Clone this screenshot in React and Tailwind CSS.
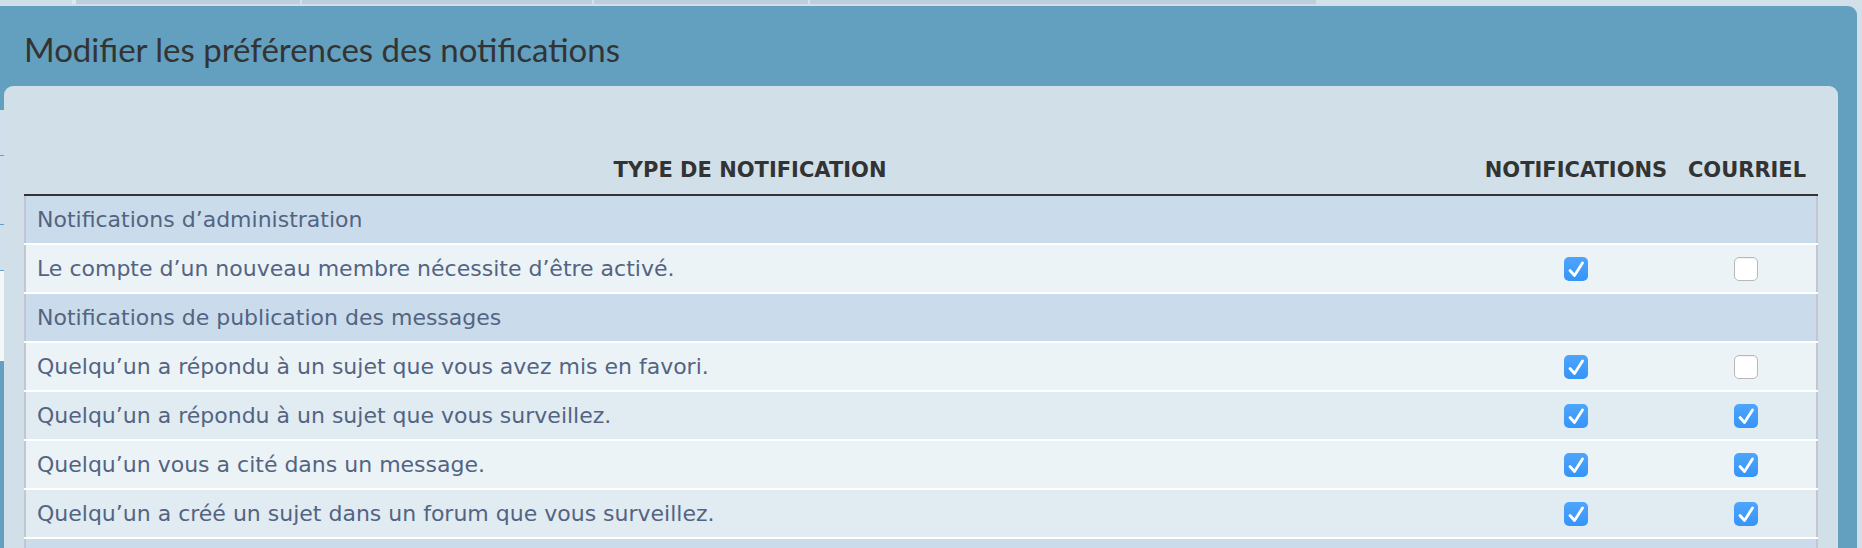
import React from "react";

// Lignes du tableau des préférences
const rows = [
  { cat: "Notifications d’administration" },
  { label: "Le compte d’un nouveau membre nécessite d’être activé.", notif: true, mail: false },
  { cat: "Notifications de publication des messages" },
  { label: "Quelqu’un a répondu à un sujet que vous avez mis en favori.", notif: true, mail: false },
  { label: "Quelqu’un a répondu à un sujet que vous surveillez.", notif: true, mail: true },
  { label: "Quelqu’un vous a cité dans un message.", notif: true, mail: true },
  { label: "Quelqu’un a créé un sujet dans un forum que vous surveillez.", notif: true, mail: true },
];

function Checkbox({ checked }) {
  if (checked) {
    return (
      <span className="flex h-[24px] w-[24px] items-center justify-center rounded-[5px] bg-gradient-to-b from-[#4ea5fc] to-[#3594f8]">
        <svg width="24" height="24" viewBox="0 0 24 24" fill="none">
          <polyline
            points="6,13.5 10.5,18.5 18.5,6"
            stroke="white"
            strokeWidth="2.8"
            strokeLinecap="round"
            strokeLinejoin="round"
          />
        </svg>
      </span>
    );
  }
  return (
    <span className="block h-[24px] w-[24px] rounded-[5px] border border-[#b8b8b8] bg-white shadow-[inset_0_1px_1px_rgba(0,0,0,0.06)]" />
  );
}

function Tabs() {
  return (
    <div className="flex h-[6px] items-start bg-[#d2e0ea]">
      <div className="h-[4px] w-[72px] bg-[#cfdde8]" />
      <div className="h-[4px] w-[4px] bg-[#dfe8ee]" />
      <div className="h-[4px] w-[224px] bg-[#bccfdd]" />
      <div className="h-[4px] w-[2px]" />
      <div className="h-[4px] w-[290px] bg-[#bccfdd]" />
      <div className="h-[4px] w-[2px]" />
      <div className="h-[4px] w-[214px] bg-[#bccfdd]" />
      <div className="h-[4px] w-[2px]" />
      <div className="h-[4px] w-[506px] bg-[#bccfdd]" />
    </div>
  );
}

export default function App() {
  let alt = 0;
  return (
    <div className="h-[548px] w-[1862px] overflow-hidden bg-[#d2e0ea]">
      <Tabs />
      <div className="w-[1857px] rounded-tr-[9px] bg-[#639fbe]">
        <h2
          className="pl-[24px] pt-[24px] text-[33px] leading-[38px] text-[#333333]"
          style={{ fontFamily: "Lato, 'Open Sans', sans-serif" }}
        >
          Modifier les préférences des notifications
        </h2>

        <div className="mt-[18px] flex">
          {/* bande de gauche */}
          <div className="flex w-[4px] flex-col">
            <div className="h-[24px]" />
            <div className="flex h-[161px] flex-col bg-[#cfe0ec]">
              <div className="h-[45px]" />
              <div className="h-[1px] bg-[#62a0c5]" />
              <div className="h-[69px]" />
              <div className="h-[1px] bg-[#62a0c5]" />
              <div className="h-[45px]" />
              <div className="h-[1px] bg-[#62a0c5]" />
            </div>
            <div className="h-[90px] bg-[#f4f7f9]" />
          </div>

          {/* panneau intérieur */}
          <div
            className="h-[500px] w-[1834px] rounded-t-[9px] bg-[#d0dfe8] px-[20px]"
            style={{ fontFamily: "'DejaVu Sans', Verdana, sans-serif" }}
          >
            <div className="grid grid-cols-[1fr_200px_142px] border-b-2 border-[#333333] pb-[12px] pt-[72px] text-[21px] font-bold leading-[24px] text-[#333333]">
              <div className="text-center">TYPE DE NOTIFICATION</div>
              <div className="text-center">NOTIFICATIONS</div>
              <div className="text-center">COURRIEL</div>
            </div>

            <div className="flex flex-col gap-[2px] bg-white text-[22px] text-[#536482]">
              {rows.map((row, i) => {
                if (row.cat) {
                  alt = 0;
                  return (
                    <div
                      key={i}
                      className="flex h-[47px] items-center border-x-2 border-[#c2c6d3] bg-[#cadceb] pl-[11px]"
                    >
                      {row.cat}
                    </div>
                  );
                }
                const bg = alt % 2 === 0 ? "bg-[#ecf3f7]" : "bg-[#e1ebf2]";
                alt++;
                return (
                  <div
                    key={i}
                    className={`grid h-[47px] grid-cols-[1fr_200px_140px] items-center border-x-2 border-[#c2c6d3] ${bg}`}
                  >
                    <div className="pl-[11px]">{row.label}</div>
                    <div className="flex justify-center">
                      <Checkbox checked={row.notif} />
                    </div>
                    <div className="flex justify-center">
                      <Checkbox checked={row.mail} />
                    </div>
                  </div>
                );
              })}
              {/* début de la section suivante, hors champ */}
              <div className="h-[47px] border-x-2 border-[#c2c6d3] bg-[#cadceb]" />
            </div>
          </div>
        </div>
      </div>
    </div>
  );
}
